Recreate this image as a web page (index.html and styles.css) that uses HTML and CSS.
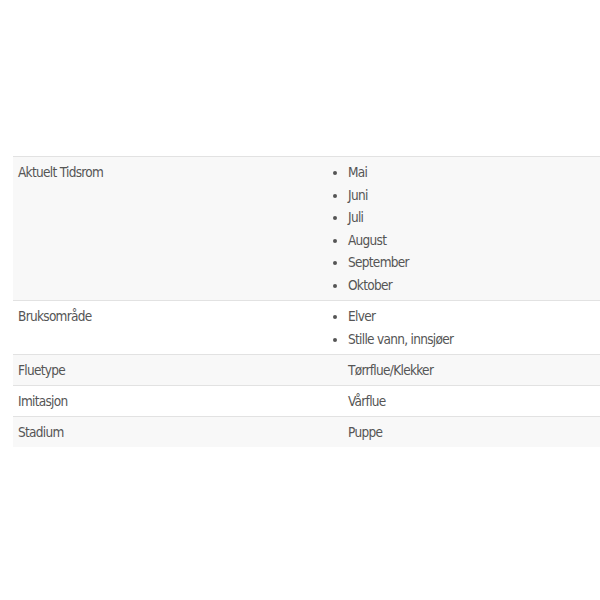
FILE: index.html
```html
<!DOCTYPE html>
<html lang="no">
<head>
<meta charset="utf-8">
<link rel="stylesheet" href="styles.css">
</head>
<body>
<div class="specs">
  <div class="row shade">
    <div class="label">Aktuelt Tidsrom</div>
    <div class="value">
      <ul class="list">
        <li>Mai</li>
        <li>Juni</li>
        <li>Juli</li>
        <li>August</li>
        <li>September</li>
        <li>Oktober</li>
      </ul>
    </div>
  </div>
  <div class="row">
    <div class="label">Bruksområde</div>
    <div class="value">
      <ul class="list">
        <li>Elver</li>
        <li>Stille vann, innsjøer</li>
      </ul>
    </div>
  </div>
  <div class="row shade">
    <div class="label">Fluetype</div>
    <div class="value">Tørrflue/Klekker</div>
  </div>
  <div class="row">
    <div class="label">Imitasjon</div>
    <div class="value">Vårflue</div>
  </div>
  <div class="row shade">
    <div class="label">Stadium</div>
    <div class="value">Puppe</div>
  </div>
</div>
</body>
</html>
```
FILE: styles.css
```css
html, body {
  margin: 0;
  padding: 0;
  background: #ffffff;
}
body {
  padding: 156px 0 0 13px;
  font-family: "DejaVu Sans Condensed", "Roboto", sans-serif;
  font-size: 13.5px;
  letter-spacing: -0.7px;
  line-height: 22px;
  color: #555555;
}
.specs {
  display: flex;
  flex-direction: column;
}
.row {
  display: grid;
  grid-template-columns: 320px 1fr;
  border-top: 1px solid #e2e2e2;
  padding: 4px 0;
}
.shade {
  background: #f8f8f8;
}
.label {
  padding-left: 5px;
}
.value {
  padding-left: 15px;
}
.list {
  margin: 0;
  padding: 0;
  list-style: disc outside;
}
.list li {
  line-height: 22.5px;
}
```
